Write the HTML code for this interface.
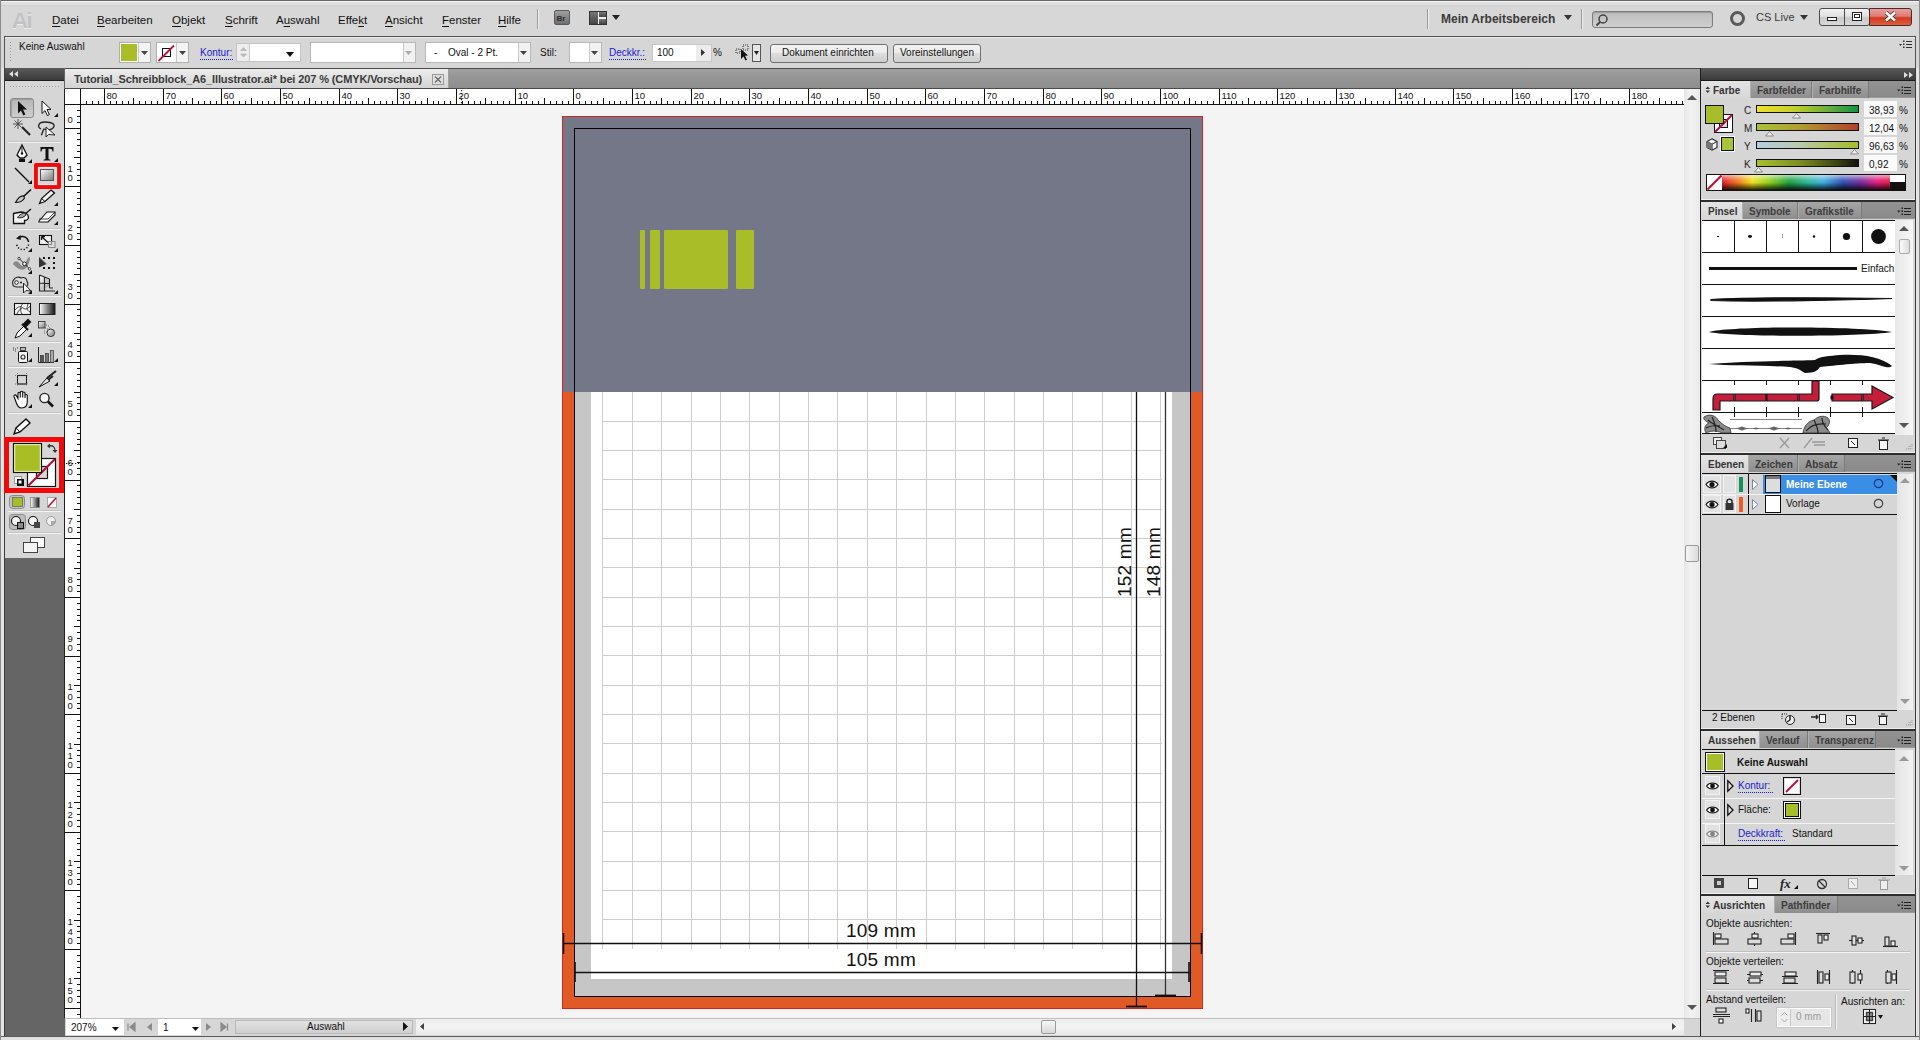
<!DOCTYPE html>
<html><head><meta charset="utf-8">
<style>
*{margin:0;padding:0;box-sizing:border-box}
html,body{width:1920px;height:1040px;overflow:hidden;background:#d9d9d9;font-family:"Liberation Sans",sans-serif;color:#111;position:relative}
.a{position:absolute}
.t{position:absolute;white-space:nowrap;line-height:1}
.u{text-decoration:underline;text-underline-offset:2px}
svg{position:absolute;overflow:visible}

</style></head><body>
<!-- window frame -->
<div class="a" style="left:0;top:0;width:1920px;height:1040px;background:#d7d7d7"></div>
<div class="a" style="left:1px;top:2px;width:1918px;height:4px;background:#e0e0e0;border-bottom:1px solid #cfcfcf"></div>
<div class="a" style="left:0;top:0;width:1920px;height:1px;background:#666"></div>
<div class="a" style="left:0;top:0;width:1px;height:1040px;background:#8a8a8a"></div>
<div class="a" style="left:1919px;top:0;width:1px;height:1040px;background:#8a8a8a"></div>
<div class="a" style="left:1px;top:1px;width:1918px;height:1px;background:#f4f4f4"></div>
<!-- MENU BAR -->
<div class="t" style="left:12px;top:8px;font:bold 22px 'Liberation Sans';color:#c2c2c2;letter-spacing:-1.5px;text-shadow:0 1px 0 #ececec">Ai</div>
<div class="t" style="left:52px;top:15px;font-size:11.5px;color:#111"><span class="u">D</span>atei</div>
<div class="t" style="left:97px;top:15px;font-size:11.5px;color:#111"><span class="u">B</span>earbeiten</div>
<div class="t" style="left:172px;top:15px;font-size:11.5px;color:#111"><span class="u">O</span>bjekt</div>
<div class="t" style="left:225px;top:15px;font-size:11.5px;color:#111"><span class="u">S</span>chrift</div>
<div class="t" style="left:276px;top:15px;font-size:11.5px;color:#111">A<span class="u">u</span>swahl</div>
<div class="t" style="left:338px;top:15px;font-size:11.5px;color:#111">Effe<span class="u">k</span>t</div>
<div class="t" style="left:385px;top:15px;font-size:11.5px;color:#111"><span class="u">A</span>nsicht</div>
<div class="t" style="left:442px;top:15px;font-size:11.5px;color:#111"><span class="u">F</span>enster</div>
<div class="t" style="left:498px;top:15px;font-size:11.5px;color:#111"><span class="u">H</span>ilfe</div>
<div class="a" style="left:537px;top:9px;width:1px;height:20px;background:#9a9a9a;box-shadow:1px 0 0 #f0f0f0"></div>
<!-- Br -->
<div class="a" style="left:554px;top:10px;width:16px;height:15px;border-radius:2px;background:linear-gradient(#a0a0a0,#6e6e6e);border:1px solid #5a5a5a"></div>
<div class="t" style="left:556.5px;top:13.5px;font:bold 8px 'Liberation Sans';color:#2e2e2e">Br</div>
<!-- layout icon -->
<div class="a" style="left:589px;top:11px;width:18px;height:14px;border:1px solid #333;background:#eee"></div>
<div class="a" style="left:590px;top:12px;width:8px;height:12px;background:linear-gradient(#777,#444)"></div>
<div class="a" style="left:599px;top:12px;width:7px;height:5px;background:linear-gradient(#777,#444)"></div>
<div class="a" style="left:599px;top:19px;width:7px;height:5px;background:linear-gradient(#777,#444)"></div>
<svg style="left:612px;top:15px" width="9" height="6"><path d="M0 0H8L4 5Z" fill="#222"/></svg>
<!-- right side -->
<div class="a" style="left:1427px;top:9px;width:1px;height:20px;background:#9a9a9a;box-shadow:1px 0 0 #f0f0f0"></div>
<div class="t" style="left:1441px;top:12px;font:bold 12px 'Liberation Sans';color:#3a3a3a">Mein Arbeitsbereich</div>
<svg style="left:1564px;top:15px" width="9" height="6"><path d="M0 0H8L4 5Z" fill="#333"/></svg>
<div class="a" style="left:1581px;top:9px;width:1px;height:20px;background:#9a9a9a;box-shadow:1px 0 0 #f0f0f0"></div>
<div class="a" style="left:1592px;top:11px;width:121px;height:17px;border:1px solid #7d7d7d;border-radius:3px;background:linear-gradient(#bdbdbd,#cfcfcf);box-shadow:inset 0 1px 1px #999"></div>
<svg style="left:1595px;top:13px" width="14" height="14"><circle cx="8" cy="6" r="4" fill="none" stroke="#444" stroke-width="1.5"/><path d="M5 9L1.5 12.5" stroke="#444" stroke-width="2"/></svg>
<svg style="left:1729px;top:10px" width="17" height="17"><circle cx="8.5" cy="8.5" r="6" fill="none" stroke="#5a5a5a" stroke-width="3"/></svg>
<div class="t" style="left:1756px;top:12px;font-size:11px;color:#3a3a3a">CS Live</div>
<svg style="left:1800px;top:15px" width="9" height="6"><path d="M0 0H8L4 5Z" fill="#333"/></svg>
<!-- window buttons -->
<div class="a" style="left:1819px;top:8px;width:51px;height:18px;border:1px solid #4a4a4a;border-radius:3px;background:linear-gradient(#f2f2f2 0%,#e0e0e0 45%,#c8c8c8 55%,#d8d8d8 100%)"></div>
<div class="a" style="left:1844px;top:9px;width:1px;height:16px;background:#4a4a4a"></div>
<div class="a" style="left:1827px;top:17px;width:10px;height:4px;border:1px solid #222;background:#fff"></div>
<div class="a" style="left:1852px;top:12px;width:10px;height:9px;border:1px solid #222;background:#fff"></div>
<div class="a" style="left:1854px;top:14px;width:6px;height:4px;border:1px solid #222"></div>
<div class="a" style="left:1869px;top:8px;width:43px;height:18px;border:1px solid #4a2a2a;border-radius:0 3px 3px 0;background:linear-gradient(#e8a0a0 0%,#e07a70 45%,#d03a20 55%,#e06040 100%)"></div>
<svg style="left:1884px;top:11px" width="13" height="11"><path d="M2 1.5L11 9.5M11 1.5L2 9.5" stroke="#333" stroke-width="4"/><path d="M2 1.5L11 9.5M11 1.5L2 9.5" stroke="#fff" stroke-width="2.5"/></svg>
<!-- CONTROL BAR -->
<div class="a" style="left:4px;top:36px;width:1912px;height:33px;background:#d6d6d6;border:1px solid #505050"></div>
<div class="a" style="left:5px;top:37px;width:1910px;height:1px;background:#ececec"></div>
<div class="a" style="left:9px;top:41px;width:3px;height:22px;background-image:radial-gradient(#9a9a9a 0.8px,transparent 1px);background-size:3px 3px"></div>
<div class="t" style="left:19px;top:42px;font-size:10px;color:#111">Keine Auswahl</div>
<!-- fill swatch -->
<div class="a" style="left:119px;top:42px;width:32px;height:21px;border:1px solid #b0b0b0;background:#f4f4f4"></div>
<div class="a" style="left:120px;top:43px;width:18px;height:19px;background:#a8bd29;border:1px solid #fff"></div>
<div class="a" style="left:138px;top:43px;width:1px;height:19px;background:#c8c8c8"></div>
<svg style="left:141px;top:51px" width="8" height="5"><path d="M0 0H7L3.5 4Z" fill="#444"/></svg>
<!-- stroke swatch -->
<div class="a" style="left:156px;top:42px;width:33px;height:21px;border:1px solid #b0b0b0;background:#f4f4f4"></div>
<div class="a" style="left:157px;top:43px;width:19px;height:19px;background:#fff"></div>
<div class="a" style="left:162px;top:48px;width:9px;height:9px;border:1.5px solid #111"></div>
<svg style="left:157px;top:44px" width="19" height="18"><path d="M1.5 17L17 1.5" stroke="#c0103a" stroke-width="1.8"/></svg>
<div class="a" style="left:176px;top:43px;width:1px;height:19px;background:#c8c8c8"></div>
<svg style="left:179px;top:51px" width="8" height="5"><path d="M0 0H7L3.5 4Z" fill="#444"/></svg>
<!-- Kontur -->
<div class="t" style="left:200px;top:48px;font-size:10px;color:#1a1ad0">Kontur:</div>
<div class="a" style="left:200px;top:59px;width:33px;height:1px;background-image:linear-gradient(90deg,#1a1ad0 50%,transparent 50%);background-size:2px 1px"></div>
<div class="a" style="left:236px;top:43px;width:65px;height:19px;background:#fff;border:1px solid #c4c4c4"></div>
<div class="a" style="left:237px;top:44px;width:13px;height:17px;background:#eee;border-right:1px solid #c8c8c8"></div>
<svg style="left:240px;top:46px" width="8" height="13"><path d="M0.5 4.5L3.5 1.5L6.5 4.5Z M0.5 8L3.5 11L6.5 8Z" fill="#bbb" stroke="#aaa" stroke-width="0.5"/></svg>
<svg style="left:286px;top:52px" width="9" height="6"><path d="M0 0H8L4 5Z" fill="#111"/></svg>
<!-- blank dropdown -->
<div class="a" style="left:310px;top:42px;width:106px;height:21px;background:#fff;border:1px solid #b8b8b8"></div>
<div class="a" style="left:403px;top:43px;width:12px;height:19px;background:#f2f2f2;border-left:1px solid #c8c8c8"></div>
<svg style="left:405px;top:51px" width="8" height="5"><path d="M0 0H7L3.5 4Z" fill="#aaa"/></svg>
<!-- Oval -->
<div class="a" style="left:425px;top:42px;width:106px;height:21px;background:#fff;border:1px solid #b8b8b8"></div>
<div class="a" style="left:518px;top:43px;width:12px;height:19px;background:#f2f2f2;border-left:1px solid #c8c8c8"></div>
<svg style="left:520px;top:51px" width="8" height="5"><path d="M0 0H7L3.5 4Z" fill="#444"/></svg>
<div class="t" style="left:434px;top:48px;font-size:10px;color:#111">-</div>
<div class="t" style="left:448px;top:48px;font-size:10px;color:#111">Oval - 2 Pt.</div>
<!-- Stil -->
<div class="t" style="left:540px;top:48px;font-size:10px;color:#111">Stil:</div>
<div class="a" style="left:569px;top:42px;width:33px;height:21px;background:#fff;border:1px solid #b8b8b8"></div>
<div class="a" style="left:589px;top:43px;width:12px;height:19px;background:#f2f2f2;border-left:1px solid #c8c8c8"></div>
<svg style="left:591px;top:51px" width="8" height="5"><path d="M0 0H7L3.5 4Z" fill="#444"/></svg>
<!-- Deckkr -->
<div class="t" style="left:609px;top:48px;font-size:10px;color:#1a1ad0">Deckkr.:</div>
<div class="a" style="left:609px;top:59px;width:37px;height:1px;background-image:linear-gradient(90deg,#1a1ad0 50%,transparent 50%);background-size:2px 1px"></div>
<div class="a" style="left:652px;top:44px;width:60px;height:18px;background:#fff;border:1px solid #c8c8c8"></div>
<div class="a" style="left:696px;top:45px;width:15px;height:16px;background:#ececec"></div>
<svg style="left:701px;top:49px" width="5" height="8"><path d="M0 0V7L4 3.5Z" fill="#333"/></svg>
<div class="t" style="left:657px;top:48px;font-size:10px;color:#111">100</div>
<div class="t" style="left:713px;top:48px;font-size:10px;color:#111">%</div>
<!-- isolate icon -->
<svg style="left:735px;top:44px" width="16" height="18"><rect x="1" y="5" width="4" height="4" fill="none" stroke="#333" stroke-dasharray="1 1"/><rect x="8" y="1" width="5" height="5" fill="none" stroke="#333" stroke-dasharray="1 1"/><path d="M6 5L6 15L8.5 12.5L10.5 16.5L12 15.8L10 11.8L13 11.5Z" fill="#111"/></svg>
<div class="a" style="left:752px;top:44px;width:9px;height:18px;border:1px solid #555;background:#e6e6e6"></div>
<svg style="left:754px;top:51px" width="6" height="5"><path d="M0 0H5L2.5 4Z" fill="#222"/></svg>
<!-- buttons -->
<div class="a" style="left:770px;top:44px;width:118px;height:19px;border:1px solid #707070;border-radius:3px;background:linear-gradient(#f2f2f2,#ebebeb 50%,#dddddd 50%,#cfcfcf)"></div>
<div class="t" style="left:782px;top:48px;font-size:10px;color:#111">Dokument einrichten</div>
<div class="a" style="left:893px;top:44px;width:88px;height:19px;border:1px solid #707070;border-radius:3px;background:linear-gradient(#f2f2f2,#ebebeb 50%,#dddddd 50%,#cfcfcf)"></div>
<div class="t" style="left:900px;top:48px;font-size:10px;color:#111">Voreinstellungen</div>
<!-- ctrl menu icon -->
<svg style="left:1899px;top:40px" width="14" height="9"><path d="M0 4H3L1.5 6Z" fill="#333"/><rect x="4" y="0.5" width="1.5" height="1.5" fill="#333"/><rect x="4" y="3.5" width="1.5" height="1.5" fill="#333"/><rect x="4" y="6.5" width="1.5" height="1.5" fill="#333"/><rect x="7" y="1" width="6" height="1" fill="#333"/><rect x="7" y="4" width="6" height="1" fill="#333"/><rect x="7" y="7" width="6" height="1" fill="#333"/></svg>
<!-- LEFT TOOLBAR -->
<div class="a" style="left:1px;top:68px;width:4px;height:969px;background:#e4e4e4"></div>
<div class="a" style="left:4px;top:68px;width:61px;height:969px;background:#656565;border-left:1px solid #3c3c3c"></div>
<div class="a" style="left:5px;top:68px;width:59px;height:13px;background:linear-gradient(#5a5a5a,#3a3a3a);border-bottom:1px solid #1e1e1e"></div>
<svg style="left:9px;top:71px" width="10" height="7"><path d="M4 0V6L0 3Z M9 0V6L5 3Z" fill="#ddd"/></svg>
<div class="a" style="left:5px;top:81px;width:59px;height:477px;background:#d6d6d6"></div>
<div class="a" style="left:9px;top:85px;width:52px;height:3px;background-image:radial-gradient(#a0a0a0 0.8px,transparent 1px);background-size:3px 3px"></div>
<!-- separators -->
<div class="a" style="left:8px;top:141px;width:53px;height:2px;background:linear-gradient(#c4c4c4 50%,#f4f4f4 50%)"></div>
<div class="a" style="left:8px;top:228px;width:53px;height:2px;background:linear-gradient(#c4c4c4 50%,#f4f4f4 50%)"></div>
<div class="a" style="left:8px;top:295px;width:53px;height:2px;background:linear-gradient(#c4c4c4 50%,#f4f4f4 50%)"></div>
<div class="a" style="left:8px;top:341px;width:53px;height:2px;background:linear-gradient(#c4c4c4 50%,#f4f4f4 50%)"></div>
<div class="a" style="left:8px;top:366px;width:53px;height:2px;background:linear-gradient(#c4c4c4 50%,#f4f4f4 50%)"></div>
<div class="a" style="left:8px;top:412px;width:53px;height:2px;background:linear-gradient(#c4c4c4 50%,#f4f4f4 50%)"></div>
<div class="a" style="left:8px;top:510px;width:53px;height:2px;background:linear-gradient(#c4c4c4 50%,#f4f4f4 50%)"></div>
<div class="a" style="left:8px;top:532px;width:53px;height:2px;background:linear-gradient(#c4c4c4 50%,#f4f4f4 50%)"></div>
<!-- pressed selection button -->
<div class="a" style="left:10px;top:98px;width:24px;height:20px;border:1px solid #8a8a8a;border-radius:3px;background:linear-gradient(#b8b8b8,#cdcdcd);box-shadow:inset 1px 1px 1px #a0a0a0"></div>
<!-- red box -->
<div class="a" style="left:34px;top:163px;width:27px;height:26px;border:5px solid #f00a0a;border-radius:2px"></div>
<div class="a" style="left:4px;top:437px;width:60px;height:56px;border:5px solid #f00a0a"></div>
<svg style="left:0;top:0" width="1920" height="1040">
<defs>
<linearGradient id="gg" x1="0" y1="0" x2="1" y2="1"><stop offset="0" stop-color="#fff"/><stop offset="1" stop-color="#777"/></linearGradient>
<linearGradient id="gh" x1="0" y1="0" x2="1" y2="0"><stop offset="0" stop-color="#fff"/><stop offset="1" stop-color="#111"/></linearGradient>
</defs>
<g fill="#111" stroke="none">
<!-- selection -->
<path d="M18 101V113.5L21 110.6L23.4 115.6L25.4 114.6L23 109.6L27 109.4Z"/>
<!-- direct select -->
<path d="M42 101V113.5L45 110.6L47.4 115.6L49.4 114.6L47 109.6L51 109.4Z" fill="#fff" stroke="#111" stroke-width="1"/>
<path d="M58 113V117H54Z"/>
<!-- magic wand -->
<path d="M22 127L30 135" stroke="#222" stroke-width="2.2"/>
<path d="M18 119V129M13 124H23M14.5 120.5L21.5 127.5M21.5 120.5L14.5 127.5" stroke="#444" stroke-width="0.9"/>
<!-- lasso -->
<path d="M41 129C37 127 38 122 45 122C53 122 56 125 53 128C51 130 47 130 44 129C42 131 43 134 41 135" fill="none" stroke="#222" stroke-width="1.3"/>
<path d="M46 127V137L48.5 134.5L55 135Z" fill="#fff" stroke="#222" stroke-width="1"/>
<!-- pen -->
<path d="M22 145L27 155L24 158H20L17 155Z" fill="#fff" stroke="#111" stroke-width="1.3"/>
<path d="M22 147V153" stroke="#111" stroke-width="1"/><circle cx="22" cy="153.5" r="1.2"/>
<path d="M19 159H25V162H19Z"/>
<path d="M32 159V163H28Z"/>
<!-- type -->
<path d="M40.5 147H53.5V151.5H52.5C52.3 149.5 51.5 148.8 50 148.8H48.5V158.5C48.5 159.3 49 159.6 50.5 159.7V160.5H43.5V159.7C45 159.6 45.5 159.3 45.5 158.5V148.8H44C42.5 148.8 41.7 149.5 41.5 151.5H40.5Z"/>
<path d="M58 158V162H54Z"/>
<!-- line -->
<path d="M15 168L29 182" stroke="#111" stroke-width="1.4"/>
<path d="M32 180V184H28Z"/>
<!-- rect -->
<rect x="38.5" y="167.5" width="18" height="17" fill="none" stroke="#fbe6e6" stroke-width="1.2"/><rect x="40.5" y="169.5" width="13" height="11" fill="url(#gg)" stroke="#555" stroke-width="1"/>
<!-- brush -->
<path d="M31 189.5L22.5 197.5" stroke="#111" stroke-width="1.6"/>
<path d="M23.5 196C21 195.5 18 198 15.5 202.5C19.5 202.5 23 201 24.5 198Z" fill="#c8c8c8" stroke="#111" stroke-width="1.1"/>
<!-- pencil -->
<path d="M39.5 203.5L41.5 198.5L51 190L54.5 193L45 201.5Z" fill="#f0f0f0" stroke="#111" stroke-width="1.2"/>
<path d="M41.5 198.5L45 201.5M51 190L54.5 193" stroke="#111" stroke-width="1"/>
<path d="M58 202V206H54Z"/>
<!-- blob brush -->
<path d="M13.5 213.5L21 212C25 212 28.5 214 28.5 217.5C28.5 219.5 26 220.5 24.5 220.5V223.5H13.5Z" fill="#f2f2f2" stroke="#111" stroke-width="1.3"/>
<path d="M31 209L25 214" stroke="#111" stroke-width="1.3"/>
<path d="M25.5 213.5C23 212.5 19 215 17.5 217.5C20 218.5 24 217.5 26 215Z" fill="#aaa" stroke="#222" stroke-width="1"/>
<!-- eraser -->
<path d="M39 221L47 212H55L55 215L48 222H39Z" fill="#fff" stroke="#111" stroke-width="1.1"/>
<path d="M39 219H48L55 212" fill="none" stroke="#111" stroke-width="0.8"/>
<path d="M58 221V225H54Z"/>
<!-- rotate -->
<path d="M18.5 237.5C21 235.8 25 236 27 238.5C28 239.8 28.5 241 28.5 242" fill="none" stroke="#111" stroke-width="1.5"/>
<path d="M16 238.5L20.5 235L20.8 240Z"/>
<path d="M28.5 244.5A6 6 0 0 1 16.6 243" fill="none" stroke="#111" stroke-width="1.6" stroke-dasharray="1.2 1.8"/>
<path d="M32 248V252H28Z"/>
<!-- scale -->
<rect x="39.5" y="235.5" width="12" height="9" fill="#f0f0f0" stroke="#111" stroke-width="1.1"/>
<rect x="48.5" y="241.5" width="6.5" height="6" fill="#ddd" fill-opacity="0.6" stroke="#888" stroke-width="1"/>
<path d="M48 242.5L42 237M41.5 236.5V240M41.5 236.5H45" stroke="#111" stroke-width="1.3" fill="none"/>
<path d="M58 248V252H54Z"/>
<!-- warp -->
<path d="M13 264C15 260 18 261 20 264C22 267 25 266 26 262C27 259 28 257 30 257C30 261 28 267 25 269C21 271 17 268 15 266C14 265 13.5 265 13 264Z" fill="#8a8a8a"/>
<path d="M19 258.5L29.5 268.8" stroke="#111" stroke-width="0.9"/>
<circle cx="19" cy="258.5" r="1.2" fill="#fff" stroke="#111" stroke-width="0.8"/><circle cx="24.5" cy="263.8" r="1.8" fill="#fff" stroke="#111" stroke-width="0.9"/><circle cx="29.5" cy="268.8" r="1.2" fill="#fff" stroke="#111" stroke-width="0.8"/>
<path d="M32 270V274H28Z"/>
<!-- free transform -->
<path d="M39 257V267.5L46.5 264Z" fill="#333"/>
<path d="M39 257L46.5 264" stroke="#777" stroke-width="0.8"/>
<rect x="43" y="257" width="2" height="2"/><rect x="48" y="257" width="2" height="2"/><rect x="53" y="257" width="2" height="2"/>
<rect x="53" y="262" width="2" height="2"/><rect x="43" y="267" width="2" height="2"/><rect x="48" y="267" width="2" height="2"/><rect x="53" y="267" width="2" height="2"/>
<!-- shape builder -->
<path d="M14.5 286.5C12 285.5 12 281 14 279.5C15 277 19 276.5 21 278C24 276.5 27 278.5 27 281.5C28.5 283 28 286 26 287H17Z" fill="#dcdcdc" stroke="#222" stroke-width="1.1"/>
<circle cx="16.5" cy="282.5" r="1.8" fill="#fff" stroke="#111" stroke-width="0.9"/><circle cx="21" cy="282.5" r="1" fill="#111"/>
<path d="M23.5 283V293L26 290.5L31 291Z" fill="#fafafa" stroke="#222" stroke-width="1"/>
<path d="M32 290V294H28Z"/>
<!-- perspective grid -->
<defs><linearGradient id="pg" x1="0" y1="0" x2="1" y2="1"><stop offset="0" stop-color="#fff"/><stop offset="1" stop-color="#999"/></linearGradient></defs>
<path d="M39.5 275L49.5 279V286L39.5 291Z" fill="url(#pg)"/>
<path d="M39.5 275V291H55M39.5 275L49.5 279V288M44.5 277V291M39.5 283L49.5 283.5M49.5 288H53" fill="none" stroke="#222" stroke-width="1.1"/>
<path d="M58 290V294H54Z"/>
<!-- mesh -->
<rect x="14.5" y="303.5" width="16" height="11" fill="#f4f4f4" stroke="#111" stroke-width="1.1"/>
<path d="M15 310C18 306 21 306 23 308C26 310 28 309 30 306M22.5 304C20 307 20 311 22 314M17 314C18 311 20 309 22 308.5M28 304C27 307 26 310 30 312" fill="none" stroke="#333" stroke-width="0.9"/>
<!-- gradient -->
<rect x="39.5" y="303.5" width="15.5" height="11" fill="url(#gh)" stroke="#222" stroke-width="1"/>
<!-- eyedropper -->
<path d="M15 338L17 333L24 326L27 329L20 336Z" fill="#fff" stroke="#111" stroke-width="1"/>
<path d="M23 325L28 320L30 322L25 327Z M22 324L28 330" stroke="#111" stroke-width="2"/>
<path d="M32 333V337H28Z"/>
<!-- blend -->
<rect x="38.5" y="321.5" width="6.5" height="6.5" fill="url(#gg)" stroke="#444"/>
<circle cx="50.8" cy="332.8" r="3.8" fill="url(#gg)" stroke="#333"/>
<path d="M46 325H47M48 326H49M45 328H46M47 329H48M49 328H50M44 331H45M46 332H47M44 333H45" stroke="#666" stroke-width="1"/>
<!-- symbol sprayer -->
<rect x="18.5" y="351.5" width="9" height="11" rx="1" fill="#f2f2f2" stroke="#111"/>
<circle cx="23" cy="357" r="2" fill="none" stroke="#333" stroke-width="1.2"/>
<rect x="20.5" y="347.5" width="5" height="3" fill="#bbb" stroke="#222" stroke-width="0.8"/>
<path d="M13 348H14M15 349H16M13 350H14M15 351H16M17 348H18" stroke="#333"/>
<path d="M32 358V362H28Z"/>
<!-- graph -->
<path d="M38.5 347V362.5H54" fill="none" stroke="#222"/>
<rect x="40.5" y="355.5" width="3" height="7" fill="#555" stroke="#222" stroke-width="0.6"/>
<rect x="45.5" y="353.5" width="3" height="9" fill="#777" stroke="#222" stroke-width="0.6"/>
<rect x="50.5" y="350.5" width="3" height="12" fill="#aaa" stroke="#222" stroke-width="0.6"/>
<path d="M58 358V362H54Z"/>
<!-- artboard -->
<rect x="17.5" y="375.5" width="9" height="8.5" fill="none" stroke="#111" stroke-width="1.1"/>
<path d="M15 375.5H28M15 384H28M17.5 373V386M26.5 373V386" stroke="#555" stroke-width="0.7" stroke-dasharray="1 1.5"/>
<!-- slice -->
<path d="M39 387L47 378L50 381L41 386Z" fill="#eee" stroke="#111" stroke-width="1"/>
<path d="M47 378L56 371M48 380L53 376" stroke="#222" stroke-width="2"/>
<path d="M58 382V386H54Z"/>
<!-- hand -->
<path d="M15.5 400.5L14 396.5C13.5 395 15.5 394.3 16.3 395.6L18 398.5V393.5C18 392 20.3 392 20.3 393.5V397.5V392.3C20.3 390.8 22.7 390.8 22.7 392.3V397.5V393C22.7 391.6 25 391.6 25 393V398V395.5C25 394.2 27.3 394.2 27.3 395.5V401.5C27.3 405.5 25 408 21.5 408C18.5 408 17 406 15.5 400.5Z" fill="#fafafa" stroke="#111" stroke-width="1.1"/>
<path d="M32 404V408H28Z"/>
<!-- zoom -->
<circle cx="44.5" cy="398" r="4.6" fill="#f4f4f4" stroke="#222" stroke-width="1.4"/>
<path d="M48 401.5L53 406.5" stroke="#111" stroke-width="2.6"/>
<!-- pencil 2 -->
<path d="M14 434L16 428L26 419L30 423L20 432Z" fill="#fff" stroke="#111" stroke-width="1.4"/>
<path d="M16 428L20 432" stroke="#111"/>
<!-- fill / stroke -->
<rect x="27.5" y="458.5" width="28" height="28" fill="#fff" stroke="#111" stroke-width="1.2"/>
<rect x="36.5" y="466.5" width="11" height="12" fill="#d8d8d8" stroke="#111" stroke-width="1.2"/>
<path d="M28.5 485.5L55 459" stroke="#b50e3a" stroke-width="2.2"/>
<rect x="13.5" y="443.5" width="28" height="29" fill="#a8bd26" stroke="#111" stroke-width="1.2"/>
<rect x="14.7" y="444.7" width="25.6" height="26.6" fill="none" stroke="#f4f4c0" stroke-width="1"/>
<path d="M49 446C53 445 55 447 55 451" fill="none" stroke="#333" stroke-width="1.3"/>
<path d="M47 446L50 443.5V448.5Z M55 453L52.5 450H57.5Z" fill="#333"/>
<rect x="14.5" y="476.5" width="7" height="7" fill="#fff" stroke="#999"/>
<rect x="17.5" y="479.5" width="6" height="6" fill="#111" stroke="#111"/>
<rect x="18.5" y="480.5" width="3" height="3" fill="#fff"/>
<!-- color mode row -->
<rect x="9.5" y="495.5" width="15" height="13" rx="3" fill="#c4c4c4" stroke="#8a8a8a"/>
<rect x="12.5" y="497.5" width="10" height="9" fill="#a6bc2a" stroke="#666" stroke-width="0.8"/>
<rect x="30.5" y="497.5" width="9" height="10" fill="url(#gh)" stroke="#888" stroke-width="0.8"/>
<rect x="47.5" y="497.5" width="9" height="10" fill="#fff" stroke="#999" stroke-width="0.8"/>
<path d="M48 507L56 498" stroke="#bf0d3e" stroke-width="1.6"/>
<!-- draw modes -->
<rect x="9.5" y="514.5" width="16" height="15" rx="3" fill="#bcbcbc" stroke="#8a8a8a"/>
<circle cx="16" cy="521" r="4.5" fill="#f4f4f4" stroke="#111" stroke-width="1.1"/>
<rect x="17.5" y="522.5" width="6" height="6" fill="#888" stroke="#111"/>
<circle cx="33" cy="521" r="4.5" fill="#f4f4f4" stroke="#111" stroke-width="1.1"/>
<path d="M34 522H40V528H34Z" fill="#444"/>
<circle cx="51" cy="521" r="4.5" fill="#f0f0f0" stroke="#999" stroke-width="1"/>
<path d="M51 521H55.5A4.5 4.5 0 0 1 51 525.5Z" fill="#aaa"/>
<!-- screen mode -->
<rect x="30.5" y="537.5" width="14" height="10" fill="#fff" stroke="#444" stroke-width="1"/>
<rect x="23.5" y="542.5" width="14" height="10" fill="#f4f4f4" stroke="#444" stroke-width="1"/>
</g>
</svg>
<!-- DOC TAB BAR -->
<div class="a" style="left:65px;top:68px;width:1635px;height:21px;background:linear-gradient(#4a4a4a 0,#4a4a4a 1px,#a0a0a0 1px,#969696 40%,#8e8e8e);border-bottom:1px solid #4a4a4a"></div>
<div class="a" style="left:65px;top:69px;width:384px;height:19px;background:linear-gradient(#ececec,#d4d4d4);border-right:1px solid #a0a0a0"></div>
<div class="t" style="left:74px;top:73px;font:bold 11px 'Liberation Sans';color:#3a3a3a;letter-spacing:-0.12px">Tutorial_Schreibblock_A6_Illustrator.ai* bei 207 % (CMYK/Vorschau)</div>
<div class="a" style="left:432px;top:74px;width:12px;height:11px;border:1px solid #9a9a9a;background:#e0e0e0"></div>
<svg style="left:434px;top:76px" width="8" height="7"><path d="M1 0.5L7 6.5M7 0.5L1 6.5" stroke="#666" stroke-width="1.2"/></svg>
<div class="a" style="left:65px;top:89px;width:1619px;height:16px;background:#fff;border-bottom:1px solid #111"></div>
<div class="a" style="left:64px;top:89px;width:17px;height:929px;background:#fff;border-left:1px solid #222;border-right:1px solid #111"></div>
<div class="a" style="left:65px;top:104px;width:16px;height:1px;background:#111"></div>
<div class="a" style="left:81px;top:105px;width:1603px;height:913px;background:#f4f4f4"></div>
<svg style="left:0;top:0" width="1920" height="1040"><g stroke="#111" stroke-width="1" shape-rendering="crispEdges">
<path d="M86.5 101V104 M92.5 101V104 M98.5 101V104 M104.5 89V104 M110.5 101V104 M116.5 101V104 M122.5 101V104 M128.5 101V104 M133.5 98V104 M139.5 101V104 M145.5 101V104 M151.5 101V104 M157.5 101V104 M163.5 89V104 M169.5 101V104 M174.5 101V104 M180.5 101V104 M186.5 101V104 M192.5 98V104 M198.5 101V104 M204.5 101V104 M210.5 101V104 M216.5 101V104 M221.5 89V104 M227.5 101V104 M233.5 101V104 M239.5 101V104 M245.5 101V104 M251.5 98V104 M257.5 101V104 M262.5 101V104 M268.5 101V104 M274.5 101V104 M280.5 89V104 M286.5 101V104 M292.5 101V104 M298.5 101V104 M304.5 101V104 M309.5 98V104 M315.5 101V104 M321.5 101V104 M327.5 101V104 M333.5 101V104 M339.5 89V104 M345.5 101V104 M350.5 101V104 M356.5 101V104 M362.5 101V104 M368.5 98V104 M374.5 101V104 M380.5 101V104 M386.5 101V104 M392.5 101V104 M397.5 89V104 M403.5 101V104 M409.5 101V104 M415.5 101V104 M421.5 101V104 M427.5 98V104 M433.5 101V104 M438.5 101V104 M444.5 101V104 M450.5 101V104 M456.5 89V104 M462.5 101V104 M468.5 101V104 M474.5 101V104 M480.5 101V104 M485.5 98V104 M491.5 101V104 M497.5 101V104 M503.5 101V104 M509.5 101V104 M515.5 89V104 M521.5 101V104 M526.5 101V104 M532.5 101V104 M538.5 101V104 M544.5 98V104 M550.5 101V104 M556.5 101V104 M562.5 101V104 M568.5 101V104 M573.5 89V104 M579.5 101V104 M585.5 101V104 M591.5 101V104 M597.5 101V104 M603.5 98V104 M609.5 101V104 M614.5 101V104 M620.5 101V104 M626.5 101V104 M632.5 89V104 M638.5 101V104 M644.5 101V104 M650.5 101V104 M656.5 101V104 M661.5 98V104 M667.5 101V104 M673.5 101V104 M679.5 101V104 M685.5 101V104 M691.5 89V104 M697.5 101V104 M702.5 101V104 M708.5 101V104 M714.5 101V104 M720.5 98V104 M726.5 101V104 M732.5 101V104 M738.5 101V104 M744.5 101V104 M749.5 89V104 M755.5 101V104 M761.5 101V104 M767.5 101V104 M773.5 101V104 M779.5 98V104 M785.5 101V104 M790.5 101V104 M796.5 101V104 M802.5 101V104 M808.5 89V104 M814.5 101V104 M820.5 101V104 M826.5 101V104 M832.5 101V104 M837.5 98V104 M843.5 101V104 M849.5 101V104 M855.5 101V104 M861.5 101V104 M867.5 89V104 M873.5 101V104 M878.5 101V104 M884.5 101V104 M890.5 101V104 M896.5 98V104 M902.5 101V104 M908.5 101V104 M914.5 101V104 M920.5 101V104 M925.5 89V104 M931.5 101V104 M937.5 101V104 M943.5 101V104 M949.5 101V104 M955.5 98V104 M961.5 101V104 M966.5 101V104 M972.5 101V104 M978.5 101V104 M984.5 89V104 M990.5 101V104 M996.5 101V104 M1002.5 101V104 M1008.5 101V104 M1013.5 98V104 M1019.5 101V104 M1025.5 101V104 M1031.5 101V104 M1037.5 101V104 M1043.5 89V104 M1049.5 101V104 M1054.5 101V104 M1060.5 101V104 M1066.5 101V104 M1072.5 98V104 M1078.5 101V104 M1084.5 101V104 M1090.5 101V104 M1096.5 101V104 M1101.5 89V104 M1107.5 101V104 M1113.5 101V104 M1119.5 101V104 M1125.5 101V104 M1131.5 98V104 M1137.5 101V104 M1142.5 101V104 M1148.5 101V104 M1154.5 101V104 M1160.5 89V104 M1166.5 101V104 M1172.5 101V104 M1178.5 101V104 M1184.5 101V104 M1189.5 98V104 M1195.5 101V104 M1201.5 101V104 M1207.5 101V104 M1213.5 101V104 M1219.5 89V104 M1225.5 101V104 M1231.5 101V104 M1236.5 101V104 M1242.5 101V104 M1248.5 98V104 M1254.5 101V104 M1260.5 101V104 M1266.5 101V104 M1272.5 101V104 M1277.5 89V104 M1283.5 101V104 M1289.5 101V104 M1295.5 101V104 M1301.5 101V104 M1307.5 98V104 M1313.5 101V104 M1319.5 101V104 M1324.5 101V104 M1330.5 101V104 M1336.5 89V104 M1342.5 101V104 M1348.5 101V104 M1354.5 101V104 M1360.5 101V104 M1365.5 98V104 M1371.5 101V104 M1377.5 101V104 M1383.5 101V104 M1389.5 101V104 M1395.5 89V104 M1401.5 101V104 M1407.5 101V104 M1412.5 101V104 M1418.5 101V104 M1424.5 98V104 M1430.5 101V104 M1436.5 101V104 M1442.5 101V104 M1448.5 101V104 M1453.5 89V104 M1459.5 101V104 M1465.5 101V104 M1471.5 101V104 M1477.5 101V104 M1483.5 98V104 M1489.5 101V104 M1495.5 101V104 M1500.5 101V104 M1506.5 101V104 M1512.5 89V104 M1518.5 101V104 M1524.5 101V104 M1530.5 101V104 M1536.5 101V104 M1541.5 98V104 M1547.5 101V104 M1553.5 101V104 M1559.5 101V104 M1565.5 101V104 M1571.5 89V104 M1577.5 101V104 M1583.5 101V104 M1588.5 101V104 M1594.5 101V104 M1600.5 98V104 M1606.5 101V104 M1612.5 101V104 M1618.5 101V104 M1624.5 101V104 M1629.5 89V104 M1635.5 101V104 M1641.5 101V104 M1647.5 101V104 M1653.5 101V104 M1659.5 98V104 M1665.5 101V104 M1671.5 101V104 M1676.5 101V104 M1682.5 101V104 M77 110.5H80 M77 116.5H80 M77 122.5H80 M65 128.5H80 M77 133.5H80 M77 139.5H80 M77 145.5H80 M77 151.5H80 M74 157.5H80 M77 163.5H80 M77 169.5H80 M77 175.5H80 M77 180.5H80 M65 186.5H80 M77 192.5H80 M77 198.5H80 M77 204.5H80 M77 210.5H80 M74 216.5H80 M77 221.5H80 M77 227.5H80 M77 233.5H80 M77 239.5H80 M65 245.5H80 M77 251.5H80 M77 257.5H80 M77 263.5H80 M77 268.5H80 M74 274.5H80 M77 280.5H80 M77 286.5H80 M77 292.5H80 M77 298.5H80 M65 304.5H80 M77 309.5H80 M77 315.5H80 M77 321.5H80 M77 327.5H80 M74 333.5H80 M77 339.5H80 M77 345.5H80 M77 351.5H80 M77 356.5H80 M65 362.5H80 M77 368.5H80 M77 374.5H80 M77 380.5H80 M77 386.5H80 M74 392.5H80 M77 397.5H80 M77 403.5H80 M77 409.5H80 M77 415.5H80 M65 421.5H80 M77 427.5H80 M77 433.5H80 M77 439.5H80 M77 444.5H80 M74 450.5H80 M77 456.5H80 M77 462.5H80 M77 468.5H80 M77 474.5H80 M65 480.5H80 M77 485.5H80 M77 491.5H80 M77 497.5H80 M77 503.5H80 M74 509.5H80 M77 515.5H80 M77 521.5H80 M77 527.5H80 M77 532.5H80 M65 538.5H80 M77 544.5H80 M77 550.5H80 M77 556.5H80 M77 562.5H80 M74 568.5H80 M77 573.5H80 M77 579.5H80 M77 585.5H80 M77 591.5H80 M65 597.5H80 M77 603.5H80 M77 609.5H80 M77 615.5H80 M77 620.5H80 M74 626.5H80 M77 632.5H80 M77 638.5H80 M77 644.5H80 M77 650.5H80 M65 656.5H80 M77 661.5H80 M77 667.5H80 M77 673.5H80 M77 679.5H80 M74 685.5H80 M77 691.5H80 M77 697.5H80 M77 703.5H80 M77 708.5H80 M65 714.5H80 M77 720.5H80 M77 726.5H80 M77 732.5H80 M77 738.5H80 M74 744.5H80 M77 750.5H80 M77 755.5H80 M77 761.5H80 M77 767.5H80 M65 773.5H80 M77 779.5H80 M77 785.5H80 M77 791.5H80 M77 796.5H80 M74 802.5H80 M77 808.5H80 M77 814.5H80 M77 820.5H80 M77 826.5H80 M65 832.5H80 M77 838.5H80 M77 843.5H80 M77 849.5H80 M77 855.5H80 M74 861.5H80 M77 867.5H80 M77 873.5H80 M77 879.5H80 M77 884.5H80 M65 890.5H80 M77 896.5H80 M77 902.5H80 M77 908.5H80 M77 914.5H80 M74 920.5H80 M77 926.5H80 M77 931.5H80 M77 937.5H80 M77 943.5H80 M65 949.5H80 M77 955.5H80 M77 961.5H80 M77 967.5H80 M77 972.5H80 M74 978.5H80 M77 984.5H80 M77 990.5H80 M77 996.5H80 M77 1002.5H80 M65 1008.5H80 M77 1014.5H80"/>
</g><g font-family="Liberation Sans" font-size="9.5" fill="#111">
<text x="106.5" y="99">80</text>
<text x="165.5" y="99">70</text>
<text x="223.5" y="99">60</text>
<text x="282.5" y="99">50</text>
<text x="341.5" y="99">40</text>
<text x="399.5" y="99">30</text>
<text x="458.5" y="99">20</text>
<text x="517.5" y="99">10</text>
<text x="575.5" y="99">0</text>
<text x="634.5" y="99">10</text>
<text x="693.5" y="99">20</text>
<text x="751.5" y="99">30</text>
<text x="810.5" y="99">40</text>
<text x="869.5" y="99">50</text>
<text x="927.5" y="99">60</text>
<text x="986.5" y="99">70</text>
<text x="1045.5" y="99">80</text>
<text x="1103.5" y="99">90</text>
<text x="1162.5" y="99">100</text>
<text x="1221.5" y="99">110</text>
<text x="1279.5" y="99">120</text>
<text x="1338.5" y="99">130</text>
<text x="1397.5" y="99">140</text>
<text x="1455.5" y="99">150</text>
<text x="1514.5" y="99">160</text>
<text x="1573.5" y="99">170</text>
<text x="1631.5" y="99">180</text>
<text x="67.5" y="123.0">0</text>
<text x="67.5" y="171.5">1</text>
<text x="67.5" y="181.0">0</text>
<text x="67.5" y="230.5">2</text>
<text x="67.5" y="240.0">0</text>
<text x="67.5" y="289.5">3</text>
<text x="67.5" y="299.0">0</text>
<text x="67.5" y="347.5">4</text>
<text x="67.5" y="357.0">0</text>
<text x="67.5" y="406.5">5</text>
<text x="67.5" y="416.0">0</text>
<text x="67.5" y="465.5">6</text>
<text x="67.5" y="475.0">0</text>
<text x="67.5" y="523.5">7</text>
<text x="67.5" y="533.0">0</text>
<text x="67.5" y="582.5">8</text>
<text x="67.5" y="592.0">0</text>
<text x="67.5" y="641.5">9</text>
<text x="67.5" y="651.0">0</text>
<text x="67.5" y="690.0">1</text>
<text x="67.5" y="699.5">0</text>
<text x="67.5" y="709.0">0</text>
<text x="67.5" y="749.0">1</text>
<text x="67.5" y="758.5">1</text>
<text x="67.5" y="768.0">0</text>
<text x="67.5" y="808.0">1</text>
<text x="67.5" y="817.5">2</text>
<text x="67.5" y="827.0">0</text>
<text x="67.5" y="866.0">1</text>
<text x="67.5" y="875.5">3</text>
<text x="67.5" y="885.0">0</text>
<text x="67.5" y="925.0">1</text>
<text x="67.5" y="934.5">4</text>
<text x="67.5" y="944.0">0</text>
<text x="67.5" y="984.0">1</text>
<text x="67.5" y="993.5">5</text>
<text x="67.5" y="1003.0">0</text>
</g>
<path d="M461.5 90V104M66 463.5H80" stroke="#111" stroke-width="1.2" stroke-dasharray="1.2 1.8"/>
</svg>
<div class="a" style="left:1684px;top:89px;width:16px;height:929px;background:linear-gradient(90deg,#e6e6e6,#f2f2f2 40%,#eaeaea)"></div>
<svg style="left:1687px;top:95px" width="10" height="6"><path d="M0 5L5 0L10 5Z" fill="#555"/></svg>
<svg style="left:1687px;top:1005px" width="10" height="6"><path d="M0 0L5 5L10 0Z" fill="#555"/></svg>
<div class="a" style="left:1685px;top:545px;width:14px;height:17px;border:1px solid #9a9a9a;border-radius:2px;background:linear-gradient(90deg,#f6f6f6,#dcdcdc)"></div>
<!-- ARTBOARD -->
<div class="a" style="left:562px;top:116px;width:641px;height:893px;background:#e05a25;border:1px solid #d8241e"></div>
<div class="a" style="left:574px;top:128px;width:617px;height:869px;background:#c6c6c6;border:1px solid #000"></div>
<div class="a" style="left:591px;top:391px;width:581px;height:588px;background:#fff"></div>
<svg style="left:0;top:0" width="1920" height="1040"><path d="M602.5 391.9V949 M632.5 391.9V949 M661.5 391.9V949 M691.5 391.9V949 M720.5 391.9V949 M749.5 391.9V949 M779.5 391.9V949 M808.5 391.9V949 M837.5 391.9V949 M867.5 391.9V949 M896.5 391.9V949 M926.5 391.9V949 M955.5 391.9V949 M984.5 391.9V949 M1014.5 391.9V949 M1043.5 391.9V949 M1072.5 391.9V949 M1102.5 391.9V949 M1131.5 391.9V949 M1160.5 391.9V949 M602.5 421.5H1161.5 M602.5 450.5H1161.5 M602.5 479.5H1161.5 M602.5 509.5H1161.5 M602.5 538.5H1161.5 M602.5 567.5H1161.5 M602.5 597.5H1161.5 M602.5 626.5H1161.5 M602.5 655.5H1161.5 M602.5 685.5H1161.5 M602.5 714.5H1161.5 M602.5 743.5H1161.5 M602.5 773.5H1161.5 M602.5 802.5H1161.5 M602.5 831.5H1161.5 M602.5 861.5H1161.5 M602.5 890.5H1161.5 M602.5 919.5H1161.5" stroke="#cdcdcd" stroke-width="1" fill="none" shape-rendering="crispEdges"/></svg>
<div class="a" style="left:563px;top:117px;width:639px;height:275px;background:#747787"></div>
<div class="a" style="left:562px;top:116px;width:641px;height:276px;border:1px solid #d8241e;border-bottom:none"></div>
<div class="a" style="left:574px;top:128px;width:617px;height:264px;border:1px solid #000;border-bottom:none"></div>
<div class="a" style="left:640px;top:229.8px;width:5.3px;height:58.8px;background:#a9bd29;border-radius:1px"></div>
<div class="a" style="left:649.8px;top:229.8px;width:10.2px;height:58.8px;background:#a9bd29;border-radius:1px"></div>
<div class="a" style="left:663.7px;top:229.8px;width:64.7px;height:58.8px;background:#a9bd29;border-radius:1px"></div>
<div class="a" style="left:736px;top:229.8px;width:18.0px;height:58.8px;background:#a9bd29;border-radius:1px"></div>
<svg style="left:0;top:0" width="1920" height="1040"><g stroke="#111" fill="none">
<path d="M563 943.5H1201" stroke-width="1.3"/>
<path d="M563.5 933V954M1201.5 933V954" stroke-width="1.6"/>
<path d="M575 972.5H1189" stroke-width="1.3"/>
<path d="M575 962V982M1189 962V982" stroke-width="1.6"/>
<path d="M1136.5 392V1007" stroke-width="1.3"/>
<path d="M1126 1006.5H1147" stroke-width="1.8"/>
<path d="M1165.5 392V996" stroke-width="1.3" stroke="#333"/>
<path d="M1155 995.5H1176" stroke-width="1.8"/>
</g><g font-family="Liberation Sans" font-size="19" fill="#111" letter-spacing="0.2">
<text x="881" y="937" text-anchor="middle">109 mm</text>
<text x="881" y="966" text-anchor="middle">105 mm</text>
<text transform="translate(1131 562) rotate(-90)" text-anchor="middle">152 mm</text>
<text transform="translate(1160 562) rotate(-90)" text-anchor="middle">148 mm</text>
</g></svg>
<!-- STATUS BAR / H SCROLL -->
<div class="a" style="left:65px;top:1018px;width:1635px;height:18px;background:#d6d6d6;border-top:1px solid #bdbdbd"></div>
<div class="a" style="left:66px;top:1019px;width:58px;height:16px;background:#fff"></div>
<div class="t" style="left:71px;top:1023px;font-size:10px;color:#111">207%</div>
<svg style="left:112px;top:1027px" width="8" height="5"><path d="M0 0H7L3.5 4Z" fill="#111"/></svg>
<svg style="left:0;top:0" width="1920" height="1040"><g fill="#8a8a8a">
<path d="M128 1023.5V1030.5M135 1023L130 1027L135 1031Z" stroke="#8a8a8a" stroke-width="1.2"/>
<path d="M152 1023L147 1027L152 1031Z"/>
<path d="M206 1023L211 1027L206 1031Z"/>
<path d="M221 1023L226 1027L221 1031Z M227.5 1023.5V1030.5" stroke="#8a8a8a" stroke-width="1.2"/>
</g></svg>
<div class="a" style="left:158px;top:1019px;width:43px;height:16px;background:#fff"></div>
<div class="t" style="left:163px;top:1023px;font-size:10px;color:#111">1</div>
<svg style="left:192px;top:1027px" width="8" height="5"><path d="M0 0H7L3.5 4Z" fill="#111"/></svg>
<div class="a" style="left:235px;top:1020px;width:178px;height:14px;background:linear-gradient(#e2e2e2,#cfcfcf);border:1px solid #b8b8b8"></div>
<div class="t" style="left:307px;top:1022px;font-size:10px;color:#111">Auswahl</div>
<svg style="left:403px;top:1022px" width="6" height="10"><path d="M0 0V9L5 4.5Z" fill="#111"/></svg>
<div class="a" style="left:416px;top:1019px;width:1268px;height:16px;background:linear-gradient(#ececec,#f4f4f4 50%,#e8e8e8)"></div>
<svg style="left:420px;top:1023px" width="5" height="8"><path d="M4 0V7L0 3.5Z" fill="#444"/></svg>
<svg style="left:1672px;top:1023px" width="5" height="8"><path d="M0 0V7L4 3.5Z" fill="#444"/></svg>
<div class="a" style="left:1041px;top:1020px;width:15px;height:14px;border:1px solid #9a9a9a;border-radius:2px;background:linear-gradient(#f8f8f8,#d8d8d8)"></div>
<div class="a" style="left:1px;top:1036px;width:1918px;height:1px;background:#5a5a5a"></div>
<div class="a" style="left:1px;top:1037px;width:1918px;height:3px;background:#e0e0e0"></div>
<!-- RIGHT PANELS -->
<div class="a" style="left:1700px;top:68px;width:216px;height:968px;background:#d6d6d6;border-left:1px solid #1e1e1e;border-right:1px solid #3a3a3a"></div>
<div class="a" style="left:1916px;top:68px;width:3px;height:968px;background:#e4e4e4"></div>
<div class="a" style="left:1701px;top:68px;width:214px;height:13px;background:linear-gradient(#5a5a5a,#3a3a3a);border-bottom:1px solid #1a1a1a"></div>
<svg style="left:1904px;top:72px" width="10" height="7"><path d="M0 0V6L4 3Z M5 0V6L9 3Z" fill="#ddd"/></svg>
<div class="a" style="left:1701px;top:199px;width:214px;height:3px;background:linear-gradient(#f0f0f0 0,#f0f0f0 1px,#2e2e2e 1px)"></div>
<div class="a" style="left:1701px;top:452px;width:214px;height:3px;background:linear-gradient(#f0f0f0 0,#f0f0f0 1px,#2e2e2e 1px)"></div>
<div class="a" style="left:1701px;top:728px;width:214px;height:3px;background:linear-gradient(#f0f0f0 0,#f0f0f0 1px,#2e2e2e 1px)"></div>
<div class="a" style="left:1701px;top:893px;width:214px;height:3px;background:linear-gradient(#f0f0f0 0,#f0f0f0 1px,#2e2e2e 1px)"></div>
<div class="a" style="left:1701px;top:81px;width:214px;height:17px;background:linear-gradient(#939393,#8a8a8a);border-bottom:1px solid #9a9a9a"></div>
<div class="a" style="left:1701px;top:81px;width:49px;height:18px;background:linear-gradient(#e4e4e4,#d6d6d6)"></div>
<svg style="left:1705px;top:86px" width="6" height="8"><path d="M0.5 3L2.75 0.5L5 3Z M0.5 4.5L2.75 7L5 4.5Z" fill="#333"/></svg>
<div class="t" style="left:1713px;top:85px;font:bold 10px 'Liberation Sans';color:#333">Farbe</div>
<div class="a" style="left:1750px;top:81px;width:62px;height:17px;background:linear-gradient(#a6a6a6,#8e8e8e);border-right:1px solid #7a7a7a;border-left:1px solid #b0b0b0"></div>
<div class="t" style="left:1757px;top:85px;font:bold 10px 'Liberation Sans';color:#3c3c3c">Farbfelder</div>
<div class="a" style="left:1812px;top:81px;width:57px;height:17px;background:linear-gradient(#a6a6a6,#8e8e8e);border-right:1px solid #7a7a7a;border-left:1px solid #b0b0b0"></div>
<div class="t" style="left:1819px;top:85px;font:bold 10px 'Liberation Sans';color:#3c3c3c">Farbhilfe</div>
<svg style="left:1897px;top:86px" width="15" height="10"><path d="M0 3.5H3.5L1.75 5.5Z" fill="#222"/><rect x="4.5" y="0.5" width="1.5" height="1.5" fill="#222"/><rect x="4.5" y="3.5" width="1.5" height="1.5" fill="#222"/><rect x="4.5" y="6.5" width="1.5" height="1.5" fill="#222"/><rect x="7" y="1" width="7" height="1" fill="#222"/><rect x="7" y="4" width="7" height="1" fill="#222"/><rect x="7" y="7" width="7" height="1" fill="#222"/></svg>
<div class="a" style="left:1714px;top:114px;width:19px;height:19px;background:#fff;border:1px solid #111"></div>
<div class="a" style="left:1719px;top:119px;width:9px;height:9px;border:1px solid #111;background:#ddd"></div>
<svg style="left:1714px;top:114px" width="19" height="19"><path d="M1 18L18 1" stroke="#bf0d3e" stroke-width="2"/></svg>
<div class="a" style="left:1705px;top:105px;width:19px;height:19px;background:#a8bd29;border:1px solid #111"></div>
<svg style="left:1706px;top:138px" width="12" height="13"><path d="M6 0.8L11 3.5V9.5L6 12.2L1 9.5V3.5Z" fill="#f4f4f4" stroke="#222" stroke-width="1.1"/><path d="M1 3.5L6 6.2L11 3.5M6 6.2V12" fill="none" stroke="#222"/><path d="M1 3.5L6 6.2V12L1 9.5Z" fill="#777"/></svg>
<div class="a" style="left:1721px;top:137px;width:13px;height:14px;background:#a8c43a;border:1px solid #111;box-shadow:0 0 0 1px #fff"></div>
<div class="t" style="left:1744px;top:106px;font-size:10px;color:#222">C</div>
<div class="a" style="left:1756px;top:105px;width:103px;height:8px;background:linear-gradient(90deg,#f0e02a,#c8d02a 35%,#6ab03a 70%,#0f9447);border:1px solid #111"></div>
<svg style="left:1792px;top:113px" width="9" height="6"><path d="M4.5 0.5L8.5 5H0.5Z" fill="#f0f0f0" stroke="#888" stroke-width="1"/></svg>
<div class="a" style="left:1864px;top:101px;width:33px;height:16px;background:#fafafa"></div>
<div class="t" style="left:1869px;top:106px;font-size:10px;color:#111">38,93</div>
<div class="t" style="left:1899px;top:106px;font-size:10px;color:#111">%</div>
<div class="t" style="left:1744px;top:124px;font-size:10px;color:#222">M</div>
<div class="a" style="left:1756px;top:123px;width:103px;height:8px;background:linear-gradient(90deg,#a8c23a,#b0a030 40%,#b07830 65%,#b04030);border:1px solid #111"></div>
<svg style="left:1765px;top:131px" width="9" height="6"><path d="M4.5 0.5L8.5 5H0.5Z" fill="#f0f0f0" stroke="#888" stroke-width="1"/></svg>
<div class="a" style="left:1864px;top:119px;width:33px;height:16px;background:#fafafa"></div>
<div class="t" style="left:1869px;top:124px;font-size:10px;color:#111">12,04</div>
<div class="t" style="left:1899px;top:124px;font-size:10px;color:#111">%</div>
<div class="t" style="left:1744px;top:142px;font-size:10px;color:#222">Y</div>
<div class="a" style="left:1756px;top:141px;width:103px;height:8px;background:linear-gradient(90deg,#b4cce4,#b8ccb0 40%,#a8c050 80%,#a8bd29);border:1px solid #111"></div>
<svg style="left:1850px;top:149px" width="9" height="6"><path d="M4.5 0.5L8.5 5H0.5Z" fill="#f0f0f0" stroke="#888" stroke-width="1"/></svg>
<div class="a" style="left:1864px;top:137px;width:33px;height:16px;background:#fafafa"></div>
<div class="t" style="left:1869px;top:142px;font-size:10px;color:#111">96,63</div>
<div class="t" style="left:1899px;top:142px;font-size:10px;color:#111">%</div>
<div class="t" style="left:1744px;top:160px;font-size:10px;color:#222">K</div>
<div class="a" style="left:1756px;top:159px;width:103px;height:8px;background:linear-gradient(90deg,#a8c030,#7a8a20 45%,#3a4212 80%,#111);border:1px solid #111"></div>
<svg style="left:1754px;top:167px" width="9" height="6"><path d="M4.5 0.5L8.5 5H0.5Z" fill="#f0f0f0" stroke="#888" stroke-width="1"/></svg>
<div class="a" style="left:1864px;top:155px;width:33px;height:16px;background:#fafafa"></div>
<div class="t" style="left:1869px;top:160px;font-size:10px;color:#111">0,92</div>
<div class="t" style="left:1899px;top:160px;font-size:10px;color:#111">%</div>
<div class="a" style="left:1706px;top:174px;width:200px;height:17px;background:#111"></div>
<div class="a" style="left:1707px;top:175px;width:15px;height:15px;background:#fff"></div>
<svg style="left:1707px;top:175px" width="15" height="15"><path d="M0.5 14.5L14.5 0.5" stroke="#c0103a" stroke-width="2.2"/></svg>
<div class="a" style="left:1722px;top:175px;width:168px;height:15px;background:linear-gradient(rgba(255,255,255,0.6),rgba(255,255,255,0.1) 35%,rgba(0,0,0,0) 50%,rgba(0,0,0,0.85) 100%),linear-gradient(90deg,#e02030,#f08020 10%,#f0e020 18%,#90d020 28%,#20a040 40%,#30b8a0 52%,#40b0e0 60%,#3050b0 72%,#7030a0 82%,#e02080 92%,#e02040)"></div>
<div class="a" style="left:1890px;top:175px;width:15px;height:7px;background:#fff"></div>
<div class="a" style="left:1701px;top:202px;width:214px;height:17px;background:linear-gradient(#939393,#8a8a8a);border-bottom:1px solid #9a9a9a"></div>
<div class="a" style="left:1701px;top:202px;width:41px;height:18px;background:linear-gradient(#e4e4e4,#d6d6d6)"></div>
<div class="t" style="left:1708px;top:206px;font:bold 10px 'Liberation Sans';color:#333">Pinsel</div>
<div class="a" style="left:1742px;top:202px;width:56px;height:17px;background:linear-gradient(#a6a6a6,#8e8e8e);border-right:1px solid #7a7a7a;border-left:1px solid #b0b0b0"></div>
<div class="t" style="left:1749px;top:206px;font:bold 10px 'Liberation Sans';color:#3c3c3c">Symbole</div>
<div class="a" style="left:1798px;top:202px;width:64px;height:17px;background:linear-gradient(#a6a6a6,#8e8e8e);border-right:1px solid #7a7a7a;border-left:1px solid #b0b0b0"></div>
<div class="t" style="left:1805px;top:206px;font:bold 10px 'Liberation Sans';color:#3c3c3c">Grafikstile</div>
<svg style="left:1897px;top:207px" width="15" height="10"><path d="M0 3.5H3.5L1.75 5.5Z" fill="#222"/><rect x="4.5" y="0.5" width="1.5" height="1.5" fill="#222"/><rect x="4.5" y="3.5" width="1.5" height="1.5" fill="#222"/><rect x="4.5" y="6.5" width="1.5" height="1.5" fill="#222"/><rect x="7" y="1" width="7" height="1" fill="#222"/><rect x="7" y="4" width="7" height="1" fill="#222"/><rect x="7" y="7" width="7" height="1" fill="#222"/></svg>
<div class="a" style="left:1702px;top:220px;width:193px;height:214px;background:#fff;border-top:1px solid #111;border-bottom:1px solid #111"></div>
<div class="a" style="left:1895px;top:220px;width:18px;height:215px;background:linear-gradient(90deg,#e8e8e8,#f6f6f6)"></div>
<svg style="left:1899px;top:226px" width="10" height="6"><path d="M0 5L5 0L10 5Z" fill="#555"/></svg>
<svg style="left:1899px;top:423px" width="10" height="6"><path d="M0 0L5 5L10 0Z" fill="#555"/></svg>
<div class="a" style="left:1899px;top:239px;width:11px;height:15px;border:1px solid #aaa;border-radius:2px;background:linear-gradient(90deg,#fafafa,#ddd)"></div>
<svg style="left:0;top:0" width="1920" height="1040"><g stroke="#111" stroke-width="1" fill="none" shape-rendering="crispEdges">
<path d="M1734.5 221V252 M1766.5 221V252 M1798.5 221V252 M1830.5 221V252 M1862.5 221V252 M1702 252.5H1895 M1702 284.5H1895 M1702 316.5H1895 M1702 348.5H1895 M1702 380.5H1895 M1702 412.5H1895 M1734.5 380V385M1734.5 407V417 M1766.5 380V385M1766.5 407V417 M1798.5 380V385M1798.5 407V417 M1830.5 380V385M1830.5 407V417 M1862.5 380V385M1862.5 407V417"/></g>
<g fill="#111">
<rect x="1717" y="236" width="2" height="1"/>
<ellipse cx="1750" cy="236.5" rx="2" ry="1.4"/>
<rect x="1782" y="234" width="0.8" height="4" fill="#888"/>
<circle cx="1814" cy="236.5" r="1.2"/>
<circle cx="1846.5" cy="236.5" r="3.6"/>
<circle cx="1878.5" cy="236.5" r="7.4"/>
<rect x="1709" y="267" width="148" height="3"/>
<text x="1861" y="272" font-family="Liberation Sans" font-size="10" fill="#111">Einfach</text>
<path d="M1711 299.5C1740 298 1790 297 1892 298.5C1850 300 1760 302 1711 300.5Z" stroke="#111" stroke-width="1.2"/>
<path d="M1709 332C1730 326 1860 326 1892 332C1860 337 1730 337 1709 332Z"/>
<path d="M1709 364C1740 361 1790 361 1815 360C1820 356 1830 356 1840 355C1860 354 1880 356 1892 366C1888 370 1880 364 1870 363C1855 363 1830 366 1820 367C1818 370 1815 373 1805 373C1800 370 1798 368 1790 367C1760 365 1730 366 1709 364Z"/>
</g>
<g fill="#c41e3a" stroke="#1a1a1a" stroke-width="1.2">
<path d="M1713 410V399C1713 396 1714 394 1717 394H1734V401H1720V410Z"/>
<path d="M1735 394H1766V401H1735Z M1767 394H1798V401H1767Z"/>
<path d="M1799 394H1812V381H1819V399C1819 400 1818 401 1816 401H1799Z"/>
<path d="M1832 394H1862V401H1832Z"/>
<path d="M1863 394H1872V386L1893 397.5L1872 409V401H1863Z"/>
</g>
<path d="M1832 395.5V399.5" stroke="#111" stroke-width="3"/>
<g fill="#555" stroke="#333" stroke-width="0.8">
<path d="M1704 417C1710 413 1716 416 1718 420C1722 424 1726 427 1730 428L1731 433H1722C1716 430 1710 431 1706 433C1703 428 1706 424 1709 423C1705 421 1703 419 1704 417Z" fill="#8a8a8a"/>
<path d="M1708 420C1712 424 1718 426 1724 430M1712 417C1714 421 1716 426 1716 432M1706 428C1710 426 1716 425 1720 426" fill="none" stroke="#222" stroke-width="1.2"/>
<path d="M1803 433C1804 426 1808 421 1814 420C1818 416 1824 415 1828 418C1831 421 1829 426 1826 428C1829 430 1830 433 1830 433Z" fill="#8a8a8a"/>
<path d="M1806 431C1810 426 1816 423 1826 424M1814 420C1816 424 1818 428 1818 433M1822 418C1822 422 1824 426 1828 430" fill="none" stroke="#222" stroke-width="1.2"/>
<path d="M1730 419.5H1802M1730 428.5H1802" stroke="#666" stroke-width="0.8" fill="none"/>
<path d="M1736 428.5L1742 426.5L1748 428.5L1742 430.5Z M1752 428.5L1756 427.5L1760 428.5L1756 429.5Z M1768 428.5L1774 426.5L1780 428.5L1774 430.5Z M1784 428.5L1788 427.5L1792 428.5L1788 429.5Z" fill="#666" stroke="none"/>
</g></svg>
<svg style="left:0;top:0" width="1920" height="1040"><g fill="none" stroke="#444" stroke-width="1"><rect x="1713.5" y="437.5" width="8" height="7" fill="#eee"/><rect x="1716.5" y="440.5" width="9" height="8" fill="#ddd"/><path d="M1723 448H1727V444Z" fill="#111" stroke="none"/><path d="M1780 438L1789 448M1789 438L1780 448" stroke="#999" stroke-width="1.3"/><path d="M1804 448L1812 438M1812 442H1825M1814 445H1825" stroke="#999" stroke-width="1.3"/><rect x="1848.5" y="438.5" width="9" height="9" fill="#f4f4f4" stroke="#222"/><path d="M1851 441L1855 445" stroke="#222"/><rect x="1879.5" y="440.5" width="8" height="9" fill="#f4f4f4" stroke="#222"/><path d="M1878 440H1889M1882 438H1885" stroke="#222"/><path d="M1906 449H1912V443M1909 449V446H1912" stroke="#999" stroke-dasharray="1 1"/></g></svg>
<div class="a" style="left:1701px;top:455px;width:214px;height:17px;background:linear-gradient(#939393,#8a8a8a);border-bottom:1px solid #9a9a9a"></div>
<div class="a" style="left:1701px;top:455px;width:47px;height:18px;background:linear-gradient(#e4e4e4,#d6d6d6)"></div>
<div class="t" style="left:1708px;top:459px;font:bold 10px 'Liberation Sans';color:#333">Ebenen</div>
<div class="a" style="left:1748px;top:455px;width:50px;height:17px;background:linear-gradient(#a6a6a6,#8e8e8e);border-right:1px solid #7a7a7a;border-left:1px solid #b0b0b0"></div>
<div class="t" style="left:1755px;top:459px;font:bold 10px 'Liberation Sans';color:#3c3c3c">Zeichen</div>
<div class="a" style="left:1798px;top:455px;width:47px;height:17px;background:linear-gradient(#a6a6a6,#8e8e8e);border-right:1px solid #7a7a7a;border-left:1px solid #b0b0b0"></div>
<div class="t" style="left:1805px;top:459px;font:bold 10px 'Liberation Sans';color:#3c3c3c">Absatz</div>
<svg style="left:1897px;top:460px" width="15" height="10"><path d="M0 3.5H3.5L1.75 5.5Z" fill="#222"/><rect x="4.5" y="0.5" width="1.5" height="1.5" fill="#222"/><rect x="4.5" y="3.5" width="1.5" height="1.5" fill="#222"/><rect x="4.5" y="6.5" width="1.5" height="1.5" fill="#222"/><rect x="7" y="1" width="7" height="1" fill="#222"/><rect x="7" y="4" width="7" height="1" fill="#222"/><rect x="7" y="7" width="7" height="1" fill="#222"/></svg>
<div class="a" style="left:1702px;top:473px;width:195px;height:1px;background:#111"></div>
<div class="a" style="left:1702px;top:710px;width:195px;height:1px;background:#111"></div>
<div class="a" style="left:1897px;top:474px;width:16px;height:236px;background:linear-gradient(90deg,#e4e4e4,#f2f2f2)"></div>
<svg style="left:1900px;top:478px" width="10" height="6"><path d="M0 5L5 0L10 5Z" fill="#999"/></svg>
<svg style="left:1900px;top:699px" width="10" height="6"><path d="M0 0L5 5L10 0Z" fill="#999"/></svg>
<div class="a" style="left:1748px;top:474px;width:1px;height:20px;background:#111"></div>
<div class="a" style="left:1748px;top:494px;width:1px;height:20px;background:#111"></div>
<div class="a" style="left:1702px;top:514px;width:195px;height:1px;background:#111"></div>
<div class="a" style="left:1702px;top:494px;width:195px;height:1px;background:#f4f4f4"></div>
<div class="a" style="left:1763px;top:475px;width:134px;height:19px;background:#3a8ee6"></div>
<svg style="left:1890px;top:475px" width="7" height="7"><path d="M0 0H7V7Z" fill="#111"/></svg>
<div class="a" style="left:1703px;top:475px;width:18px;height:18px;background:#e2e2e2;border:1px solid #f2f2f2"></div>
<svg style="left:1705px;top:480px" width="14" height="9"><path d="M1 4.5C4 0 10 0 13 4.5C10 9 4 9 1 4.5Z" fill="#fff" stroke="#111" stroke-width="1.2"/><circle cx="7" cy="4.5" r="2.6" fill="#111"/></svg>
<div class="a" style="left:1723px;top:475px;width:13px;height:18px;background:#e2e2e2;border:1px solid #f2f2f2"></div>
<svg style="left:1752px;top:479px" width="7" height="11"><path d="M0.5 0.5L6 5.5L0.5 10.5Z" fill="#fff" stroke="#7a8ab0" stroke-width="1"/></svg>
<div class="a" style="left:1703px;top:495px;width:18px;height:18px;background:#e2e2e2;border:1px solid #f2f2f2"></div>
<svg style="left:1705px;top:500px" width="14" height="9"><path d="M1 4.5C4 0 10 0 13 4.5C10 9 4 9 1 4.5Z" fill="#fff" stroke="#111" stroke-width="1.2"/><circle cx="7" cy="4.5" r="2.6" fill="#111"/></svg>
<div class="a" style="left:1723px;top:495px;width:13px;height:18px;background:#e2e2e2;border:1px solid #f2f2f2"></div>
<svg style="left:1752px;top:499px" width="7" height="11"><path d="M0.5 0.5L6 5.5L0.5 10.5Z" fill="#fff" stroke="#7a8ab0" stroke-width="1"/></svg>
<div class="a" style="left:1739px;top:477px;width:4px;height:15px;background:#12915a"></div>
<div class="a" style="left:1739px;top:497px;width:4px;height:15px;background:#ee5a20"></div>
<svg style="left:1724px;top:497px" width="11" height="14"><path d="M3 6V4C3 1.5 8 1.5 8 4V6" fill="none" stroke="#222" stroke-width="1.5"/><rect x="1.5" y="6" width="8" height="7" fill="#333"/></svg>
<div class="a" style="left:1765px;top:475px;width:16px;height:18px;background:#ddd;border:1px solid #111;box-shadow:inset 0 3px 0 #777"></div>
<div class="a" style="left:1765px;top:495px;width:16px;height:18px;background:#fff;border:1px solid #111"></div>
<div class="t" style="left:1786px;top:479px;font:bold 10px 'Liberation Sans';color:#fff">Meine Ebene</div>
<div class="t" style="left:1786px;top:499px;font-size:10px;color:#111">Vorlage</div>
<svg style="left:1873px;top:478px" width="11" height="11"><circle cx="5.5" cy="5.5" r="4.2" fill="none" stroke="#1a3a8a" stroke-width="1.2"/></svg>
<svg style="left:1873px;top:498px" width="11" height="11"><circle cx="5.5" cy="5.5" r="4.2" fill="none" stroke="#444" stroke-width="1.2"/></svg>
<div class="t" style="left:1712px;top:713px;font-size:10px;color:#111">2 Ebenen</div>
<svg style="left:0;top:0" width="1920" height="1040"><g fill="none" stroke="#222" stroke-width="1"><path d="M1782 714V719M1782 714H1787" stroke-dasharray="1 1"/><circle cx="1790" cy="720" r="4.5" fill="#eee"/><path d="M1790 720V716M1790 720L1787 722" stroke-width="1.5"/><path d="M1811 717H1818M1816 715L1818 717L1816 719" stroke-width="1.3"/><rect x="1819.5" y="714.5" width="6" height="8" fill="#f4f4f4"/><rect x="1846.5" y="715.5" width="9" height="9" fill="#f4f4f4"/><path d="M1849 718L1853 722"/><rect x="1879.5" y="716.5" width="7" height="8" fill="#f4f4f4"/><path d="M1878 716H1888M1881 714H1885"/><path d="M1906 725H1912V719M1909 725V722H1912" stroke="#999" stroke-dasharray="1 1"/></g></svg>
<div class="a" style="left:1701px;top:731px;width:214px;height:17px;background:linear-gradient(#939393,#8a8a8a);border-bottom:1px solid #9a9a9a"></div>
<div class="a" style="left:1701px;top:731px;width:58px;height:18px;background:linear-gradient(#e4e4e4,#d6d6d6)"></div>
<div class="t" style="left:1708px;top:735px;font:bold 10px 'Liberation Sans';color:#333">Aussehen</div>
<div class="a" style="left:1759px;top:731px;width:49px;height:17px;background:linear-gradient(#a6a6a6,#8e8e8e);border-right:1px solid #7a7a7a;border-left:1px solid #b0b0b0"></div>
<div class="t" style="left:1766px;top:735px;font:bold 10px 'Liberation Sans';color:#3c3c3c">Verlauf</div>
<div class="a" style="left:1808px;top:731px;width:68px;height:17px;background:linear-gradient(#a6a6a6,#8e8e8e);border-right:1px solid #7a7a7a;border-left:1px solid #b0b0b0"></div>
<div class="t" style="left:1815px;top:735px;font:bold 10px 'Liberation Sans';color:#3c3c3c">Transparenz</div>
<svg style="left:1897px;top:736px" width="15" height="10"><path d="M0 3.5H3.5L1.75 5.5Z" fill="#222"/><rect x="4.5" y="0.5" width="1.5" height="1.5" fill="#222"/><rect x="4.5" y="3.5" width="1.5" height="1.5" fill="#222"/><rect x="4.5" y="6.5" width="1.5" height="1.5" fill="#222"/><rect x="7" y="1" width="7" height="1" fill="#222"/><rect x="7" y="4" width="7" height="1" fill="#222"/><rect x="7" y="7" width="7" height="1" fill="#222"/></svg>
<div class="a" style="left:1702px;top:749px;width:193px;height:1px;background:#111"></div>
<div class="a" style="left:1702px;top:875px;width:193px;height:1px;background:#111"></div>
<div class="a" style="left:1895px;top:750px;width:18px;height:125px;background:linear-gradient(90deg,#e4e4e4,#f2f2f2)"></div>
<svg style="left:1899px;top:756px" width="10" height="6"><path d="M0 5L5 0L10 5Z" fill="#999"/></svg>
<svg style="left:1899px;top:866px" width="10" height="6"><path d="M0 0L5 5L10 0Z" fill="#999"/></svg>
<div class="a" style="left:1705px;top:752px;width:20px;height:20px;background:#a8bd29;border:1px solid #111;box-shadow:inset 0 0 0 1px #fff"></div>
<div class="t" style="left:1737px;top:757px;font:bold 10px 'Liberation Sans';color:#111">Keine Auswahl</div>
<div class="a" style="left:1702px;top:773px;width:193px;height:1px;background:#111"></div>
<div class="a" style="left:1702px;top:823px;width:193px;height:1px;background:#f6f6f6"></div>
<div class="a" style="left:1702px;top:798px;width:193px;height:1px;background:#f6f6f6"></div>
<div class="a" style="left:1702px;top:845px;width:196px;height:1px;background:#111"></div>
<div class="a" style="left:1724px;top:774px;width:1px;height:71px;background:#111"></div>
<div class="a" style="left:1705px;top:776px;width:15px;height:19px;background:#e2e2e2;border:1px solid #f2f2f2"></div>
<svg style="left:1706px;top:782px;opacity:1" width="13" height="8"><path d="M0.5 4C3.5 0 9.5 0 12.5 4C9.5 8 3.5 8 0.5 4Z" fill="#fff" stroke="#111" stroke-width="1.1"/><circle cx="6.5" cy="4" r="2.4" fill="#111"/></svg>
<div class="a" style="left:1705px;top:800px;width:15px;height:19px;background:#e2e2e2;border:1px solid #f2f2f2"></div>
<svg style="left:1706px;top:806px;opacity:1" width="13" height="8"><path d="M0.5 4C3.5 0 9.5 0 12.5 4C9.5 8 3.5 8 0.5 4Z" fill="#fff" stroke="#111" stroke-width="1.1"/><circle cx="6.5" cy="4" r="2.4" fill="#111"/></svg>
<div class="a" style="left:1705px;top:824px;width:15px;height:19px;background:#e2e2e2;border:1px solid #f2f2f2"></div>
<svg style="left:1706px;top:830px;opacity:0.45" width="13" height="8"><path d="M0.5 4C3.5 0 9.5 0 12.5 4C9.5 8 3.5 8 0.5 4Z" fill="#fff" stroke="#111" stroke-width="1.1"/><circle cx="6.5" cy="4" r="2.4" fill="#111"/></svg>
<svg style="left:1727px;top:780px" width="7" height="12"><path d="M0.8 0.8L6 6L0.8 11.2Z" fill="#e6e6e6" stroke="#111" stroke-width="1.3"/></svg>
<svg style="left:1727px;top:804px" width="7" height="12"><path d="M0.8 0.8L6 6L0.8 11.2Z" fill="#e6e6e6" stroke="#111" stroke-width="1.3"/></svg>
<div class="t" style="left:1738px;top:781px;font-size:10px;color:#1a1ad0">Kontur:</div>
<div class="a" style="left:1738px;top:792px;width:35px;height:1px;background-image:linear-gradient(90deg,#1a1ad0 50%,transparent 50%);background-size:2px 1px"></div>
<div class="a" style="left:1783px;top:777px;width:18px;height:18px;border:1px solid #111;background:#fff;box-shadow:inset 0 0 0 1px #ddd"></div>
<svg style="left:1785px;top:779px" width="14" height="14"><path d="M1 13L13 1" stroke="#c0103a" stroke-width="2"/></svg>
<div class="t" style="left:1738px;top:805px;font-size:10px;color:#111">Fl&auml;che:</div>
<div class="a" style="left:1783px;top:801px;width:18px;height:18px;border:1px solid #111;background:#a8bd29;box-shadow:inset 0 0 0 2px #fff"></div>
<div class="a" style="left:1785px;top:803px;width:14px;height:14px;border:1px solid #111;background:#a8bd29"></div>
<div class="t" style="left:1738px;top:829px;font-size:10px;color:#1a1ad0">Deckkraft:</div>
<div class="a" style="left:1738px;top:840px;width:48px;height:1px;background-image:linear-gradient(90deg,#1a1ad0 50%,transparent 50%);background-size:2px 1px"></div>
<div class="t" style="left:1792px;top:829px;font-size:10px;color:#111">Standard</div>
<svg style="left:0;top:0" width="1920" height="1040"><g fill="none" stroke="#222" stroke-width="1"><rect x="1714" y="878" width="10" height="10" fill="#444" stroke="none"/><rect x="1717" y="881" width="4" height="4" fill="#ccc" stroke="none"/><rect x="1748.5" y="878.5" width="9" height="10" fill="#f6f6f6"/><rect x="1848.5" y="878.5" width="9" height="10" fill="#eee" stroke="#aaa"/><path d="M1851 881L1855 886" stroke="#aaa"/><rect x="1880.5" y="880.5" width="7" height="9" fill="#eee" stroke="#999"/><path d="M1878 880H1890M1882 878H1886" stroke="#999"/></g></svg>
<svg style="left:1816px;top:878px" width="14" height="13"><circle cx="6" cy="6" r="4.5" fill="none" stroke="#333" stroke-width="1.3"/><path d="M3 3L9 9" stroke="#333" stroke-width="1.3"/></svg>
<div class="t" style="left:1780px;top:876px;font:italic bold 13px 'Liberation Serif';color:#222">fx</div>
<svg style="left:1794px;top:885px" width="5" height="5"><path d="M4 0V4H0Z" fill="#111"/></svg>
<div class="a" style="left:1701px;top:896px;width:214px;height:17px;background:linear-gradient(#939393,#8a8a8a);border-bottom:1px solid #9a9a9a"></div>
<div class="a" style="left:1701px;top:896px;width:73px;height:18px;background:linear-gradient(#e4e4e4,#d6d6d6)"></div>
<svg style="left:1705px;top:901px" width="6" height="8"><path d="M0.5 3L2.75 0.5L5 3Z M0.5 4.5L2.75 7L5 4.5Z" fill="#333"/></svg>
<div class="t" style="left:1713px;top:900px;font:bold 10px 'Liberation Sans';color:#333">Ausrichten</div>
<div class="a" style="left:1774px;top:896px;width:64px;height:17px;background:linear-gradient(#a6a6a6,#8e8e8e);border-right:1px solid #7a7a7a;border-left:1px solid #b0b0b0"></div>
<div class="t" style="left:1781px;top:900px;font:bold 10px 'Liberation Sans';color:#3c3c3c">Pathfinder</div>
<svg style="left:1897px;top:901px" width="15" height="10"><path d="M0 3.5H3.5L1.75 5.5Z" fill="#222"/><rect x="4.5" y="0.5" width="1.5" height="1.5" fill="#222"/><rect x="4.5" y="3.5" width="1.5" height="1.5" fill="#222"/><rect x="4.5" y="6.5" width="1.5" height="1.5" fill="#222"/><rect x="7" y="1" width="7" height="1" fill="#222"/><rect x="7" y="4" width="7" height="1" fill="#222"/><rect x="7" y="7" width="7" height="1" fill="#222"/></svg>
<div class="t" style="left:1706px;top:919px;font-size:10px;color:#111">Objekte ausrichten:</div>
<div class="a" style="left:1706px;top:951px;width:204px;height:2px;background:linear-gradient(#c0c0c0 50%,#f4f4f4 50%)"></div>
<div class="t" style="left:1706px;top:957px;font-size:10px;color:#111">Objekte verteilen:</div>
<div class="a" style="left:1706px;top:989px;width:204px;height:2px;background:linear-gradient(#c0c0c0 50%,#f4f4f4 50%)"></div>
<div class="t" style="left:1706px;top:995px;font-size:10px;color:#111">Abstand verteilen:</div>
<div class="t" style="left:1841px;top:997px;font-size:10px;color:#111">Ausrichten an:</div>
<div class="a" style="left:1835px;top:995px;width:1px;height:34px;background:#b8b8b8;box-shadow:1px 0 0 #f4f4f4"></div>
<svg style="left:0;top:0" width="1920" height="1040"><g fill="none" stroke="#222" stroke-width="1.1"><path d="M1713.5 932V945" /><rect x="1715" y="934" width="6" height="4" fill="#eee"/><rect x="1715" y="939" width="13" height="5" fill="#ddd"/><path d="M1754.5 932V946" /><rect x="1752" y="934" width="6" height="4" fill="#eee"/><rect x="1748" y="939" width="13" height="5" fill="#ddd"/><path d="M1795.5 932V945" /><rect x="1788" y="934" width="6" height="4" fill="#eee"/><rect x="1781" y="939" width="13" height="5" fill="#ddd"/><path d="M1816 933.5H1830" /><rect x="1818" y="935" width="4" height="8" fill="#ddd"/><rect x="1824" y="935" width="4" height="5" fill="#eee"/><path d="M1849 940.5H1864" /><rect x="1852" y="936" width="4" height="9" fill="#ddd"/><rect x="1858" y="938" width="4" height="5" fill="#eee"/><path d="M1883 946.5H1898" /><rect x="1885" y="937" width="4" height="9" fill="#ddd"/><rect x="1891" y="941" width="4" height="5" fill="#eee"/><path d="M1713 970.5H1729M1713 983.5H1729"/><rect x="1715" y="972" width="11" height="4" fill="#eee"/><rect x="1715" y="978" width="11" height="5" fill="#ddd"/><path d="M1747 974.5H1763M1747 980.5H1763"/><rect x="1750" y="972" width="11" height="4" fill="#eee"/><rect x="1749" y="978" width="11" height="5" fill="#ddd"/><path d="M1782 976.5H1798M1782 983.5H1798"/><rect x="1785" y="972" width="11" height="4" fill="#eee"/><rect x="1784" y="978" width="11" height="5" fill="#ddd"/><path d="M1817.5 970V984M1829.5 970V984"/><rect x="1819" y="972" width="4" height="11" fill="#ddd"/><rect x="1825" y="974" width="4" height="6" fill="#eee"/><path d="M1852.5 970V984M1860.5 970V984"/><rect x="1850" y="972" width="5" height="11" fill="#ddd"/><rect x="1858" y="974" width="4" height="6" fill="#eee"/><path d="M1887.5 970V984M1896.5 970V984"/><rect x="1886" y="972" width="5" height="11" fill="#ddd"/><rect x="1892" y="974" width="4" height="6" fill="#eee"/><path d="M1713 1014.5H1730M1713 1016.5H1730"/><rect x="1716" y="1008" width="10" height="4" fill="#ddd"/><rect x="1719" y="1019" width="4" height="4" fill="#fff"/><rect x="1746" y="1009" width="3" height="4" fill="#fff"/><path d="M1751.5 1009V1022M1755.5 1009V1022"/><rect x="1757" y="1011" width="4" height="10" fill="#ddd"/><rect x="1863.5" y="1009.5" width="12" height="14" fill="#fff"/><rect x="1866.5" y="1012.5" width="6" height="8" fill="#999" stroke="#444" stroke-width="1.5"/><path d="M1869.5 1009V1024M1863 1016.5H1876"/><path d="M1878 1015H1883L1880.5 1019Z" fill="#111" stroke="none"/></g></svg>
<div class="a" style="left:1777px;top:1008px;width:54px;height:19px;background:#e6e6e6;border:1px solid #fff;box-shadow:0 0 0 1px #c8c8c8"></div>
<div class="a" style="left:1778px;top:1009px;width:13px;height:17px;border-right:1px solid #c8c8c8;background:#eee"></div>
<svg style="left:1781px;top:1011px" width="8" height="13"><path d="M0.5 4.5L3.5 1.5L6.5 4.5M0.5 8L3.5 11L6.5 8" fill="none" stroke="#aaa"/></svg>
<div class="t" style="left:1796px;top:1012px;font-size:10px;color:#9a9a9a">0 mm</div>

</body></html>
